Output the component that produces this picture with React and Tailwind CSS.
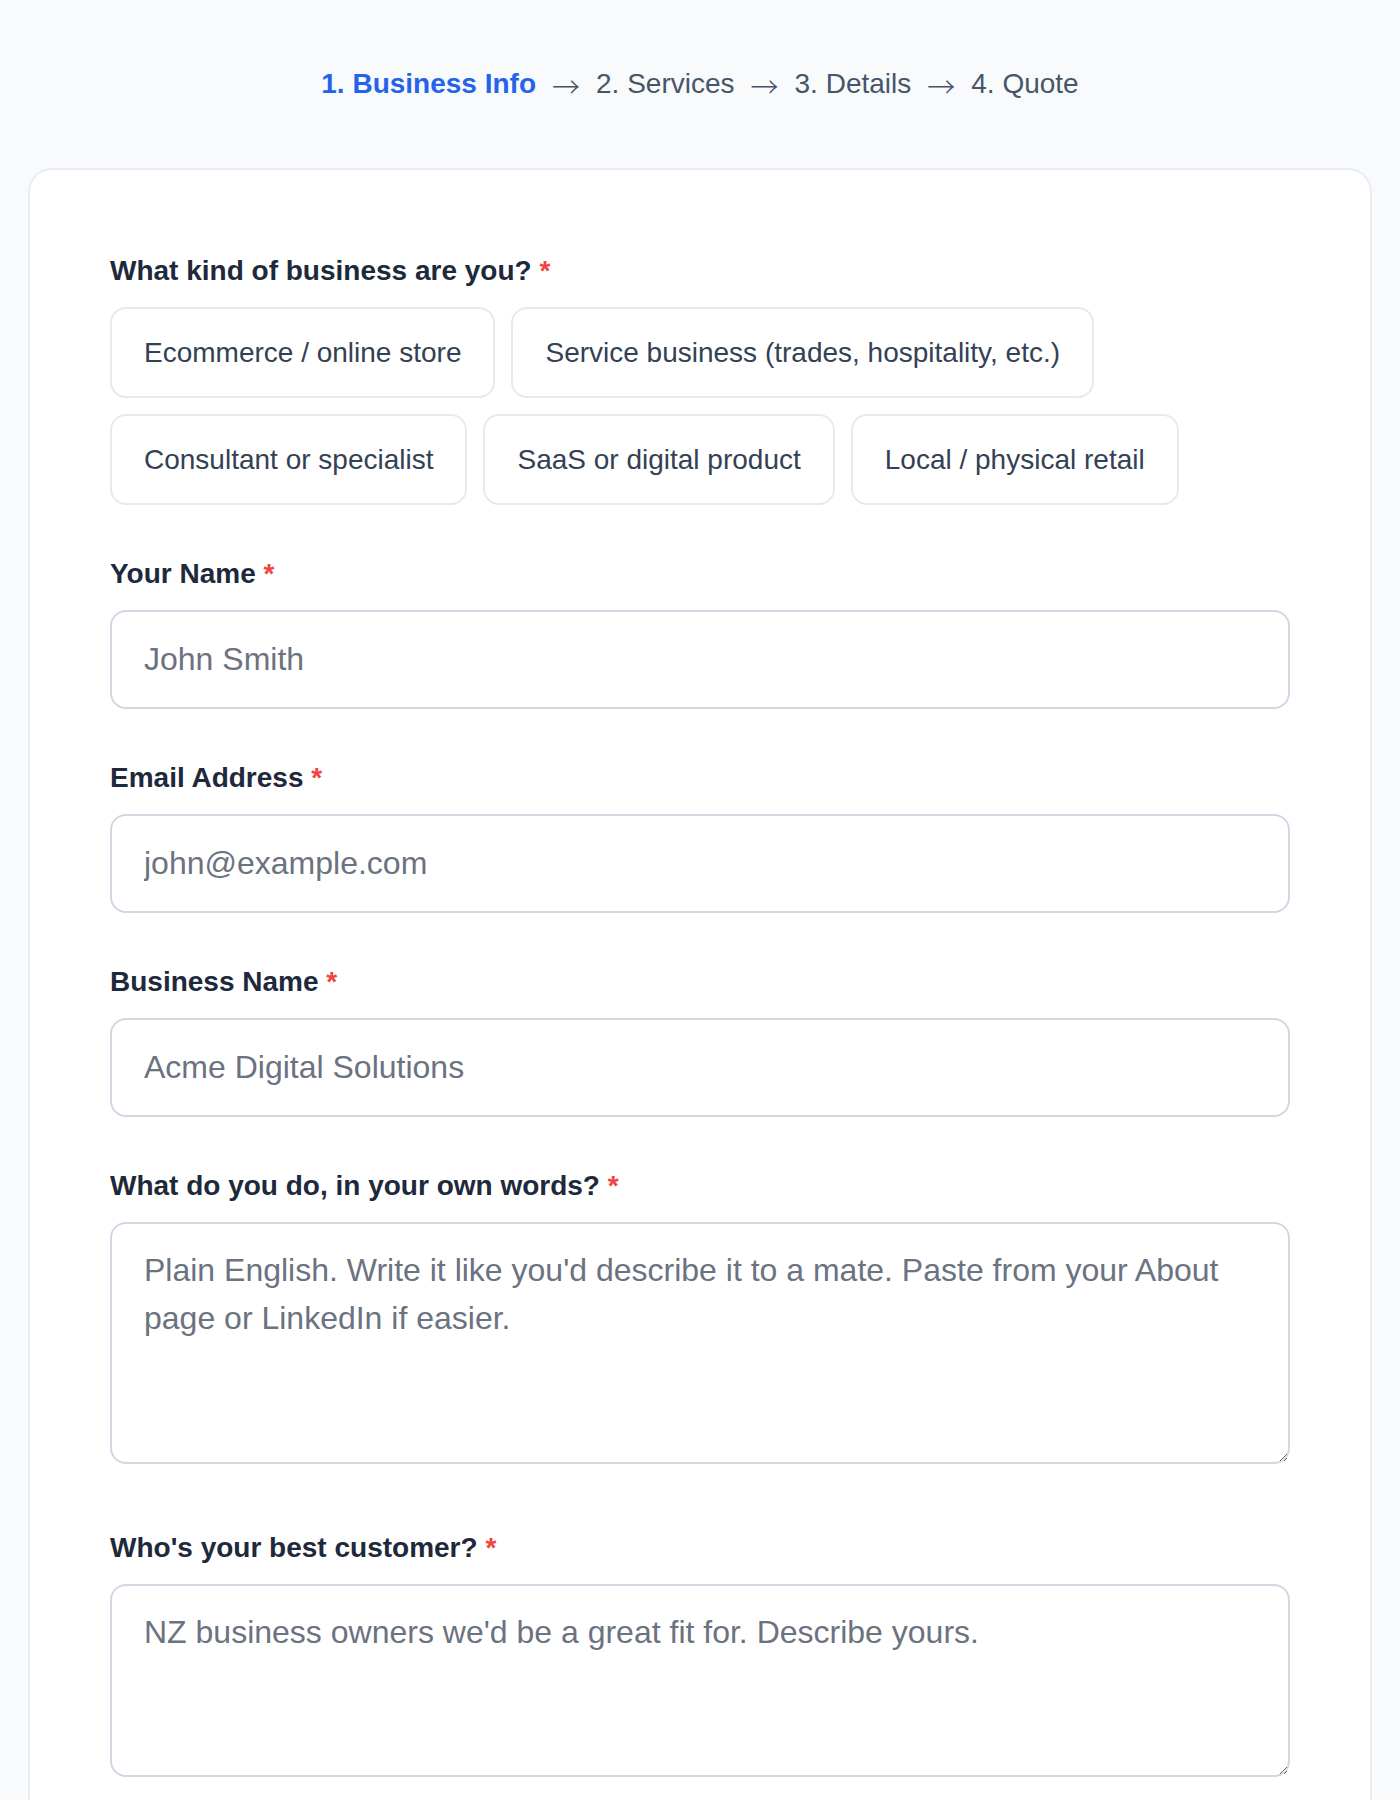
import React from "react";

const font = "font-['Liberation_Sans',Arial,Helvetica,sans-serif]";

function Label({ children }) {
  return (
    <div className="mb-[15px] text-[28px] leading-[42px] font-bold text-[#1e293b]">
      {children} <span className="text-[#ef4444]">*</span>
    </div>
  );
}

function Option({ children }) {
  return (
    <button
      type="button"
      className="h-[91px] px-8 rounded-[16px] border-2 border-[#e5e9f0] bg-white text-[28px] leading-[42px] text-[#334155] flex items-center"
    >
      {children}
    </button>
  );
}

function Input({ placeholder }) {
  return (
    <input
      type="text"
      placeholder={placeholder}
      className="block w-full h-[99px] px-8 rounded-[16px] border-2 border-[#cfd8e3] bg-white text-[32px] text-[#1e293b] placeholder:text-[#6b7280] outline-none"
    />
  );
}

function TextArea({ placeholder, h }) {
  return (
    <textarea
      placeholder={placeholder}
      className={`block w-full ${h} px-8 pt-[22px] rounded-[16px] border-2 border-[#cfd8e3] bg-white text-[32px] leading-[48px] text-[#1e293b] placeholder:text-[#6b7280] outline-none`}
    />
  );
}

export default function App() {
  const steps = ["1. Business Info", "2. Services", "3. Details", "4. Quote"];
  return (
    <div className={`${font} min-h-[1800px] bg-[#f8fafc] px-[28px] pt-[63px]`}>
      <div className="flex items-center justify-center gap-4 mb-[63px] text-[28px] leading-[42px]">
        {steps.map((s, i) => (
          <React.Fragment key={s}>
            {i > 0 && (
              <span className="font-['Noto_Sans_CJK_SC',sans-serif] font-light text-[28px] leading-[42px] text-[#475569] relative top-[2px]">
                →
              </span>
            )}
            <span className={i === 0 ? "font-bold text-[#2563eb]" : "text-[#475569]"}>{s}</span>
          </React.Fragment>
        ))}
      </div>

      <div className="bg-white border-2 border-[#e8edf3] rounded-[24px] px-[80px] pt-[80px] pb-20">
        <div className="mb-12">
          <Label>What kind of business are you?</Label>
          <div className="flex flex-wrap gap-4">
            <Option>Ecommerce / online store</Option>
            <Option>Service business (trades, hospitality, etc.)</Option>
            <Option>Consultant or specialist</Option>
            <Option>SaaS or digital product</Option>
            <Option>Local / physical retail</Option>
          </div>
        </div>

        <div className="mb-12">
          <Label>Your Name</Label>
          <Input placeholder="John Smith" />
        </div>

        <div className="mb-12">
          <Label>Email Address</Label>
          <Input placeholder="john@example.com" />
        </div>

        <div className="mb-12">
          <Label>Business Name</Label>
          <Input placeholder="Acme Digital Solutions" />
        </div>

        <div className="mb-[63px]">
          <Label>What do you do, in your own words?</Label>
          <TextArea
            h="h-[242px]"
            placeholder="Plain English. Write it like you'd describe it to a mate. Paste from your About page or LinkedIn if easier."
          />
        </div>

        <div className="mb-12">
          <Label>Who's your best customer?</Label>
          <TextArea
            h="h-[193px]"
            placeholder="NZ business owners we'd be a great fit for. Describe yours."
          />
        </div>
      </div>
    </div>
  );
}
